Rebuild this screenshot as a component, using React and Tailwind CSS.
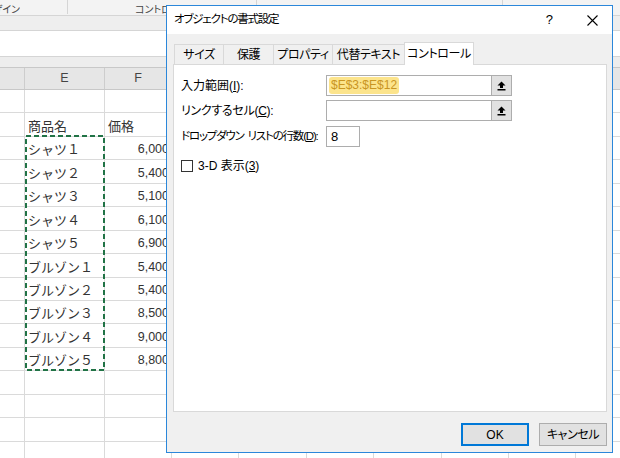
import React from "react";

const cols = [
  "w-[25px]",
  "w-[80px]",
  "w-[67px]",
  "w-[67px]",
  "w-[68px]",
  "w-[67px]",
  "w-[68px]",
  "w-[67px]",
  "w-[67px]",
  "w-[67px]",
];

const rows = [
  ["", ""],
  ["商品名", "価格"],
  ["シャツ１", "6,000"],
  ["シャツ２", "5,400"],
  ["シャツ３", "5,100"],
  ["シャツ４", "6,100"],
  ["シャツ５", "6,900"],
  ["ブルゾン１", "5,400"],
  ["ブルゾン２", "5,400"],
  ["ブルゾン３", "8,500"],
  ["ブルゾン４", "9,000"],
  ["ブルゾン５", "8,800"],
  ["", ""],
  ["", ""],
  ["", ""],
  ["", ""],
];

const tabs = [
  { label: "サイズ", w: "w-[50px]" },
  { label: "保護", w: "w-[51px]" },
  { label: "プロパティ", w: "w-[60px]" },
  { label: "代替テキスト", w: "w-[73px]" },
  { label: "コントロール", w: "w-[70px]", active: true },
];

function UpArrow() {
  return (
    <svg width="9" height="10" viewBox="0 0 9 10">
      <path d="M4.5 0.5 L8.5 4.5 H6 V7 H3 V4.5 H0.5 Z" fill="#000" />
      <rect x="0.5" y="8" width="8" height="1.5" fill="#000" />
    </svg>
  );
}

function RangeBox({ children }) {
  return (
    <div className="flex h-[21px] w-[186px]">
      <div className="flex flex-1 items-center border border-[#adadad] bg-white pl-[2px]">
        {children}
      </div>
      <div className="-ml-px flex w-[21px] items-center justify-center border border-[#adadad] bg-[#e1e1e1]">
        <UpArrow />
      </div>
    </div>
  );
}

function Sheet() {
  return (
    <div className="font-['Noto_Sans_CJK_JP',sans-serif] text-[#333]">
      {/* ribbon bottom */}
      <div className="flex h-[16px] border-b border-[#d5d5d5] bg-[#f3f3f3] pt-[2px] text-[10px] leading-[13px] text-[#444] [font-feature-settings:'palt']">
        <div className="flex w-[20px] justify-end overflow-hidden whitespace-nowrap">デザイン</div>
        <div className="w-[47px]" />
        <div className="h-[14px] w-px -mt-[2px] bg-[#d5d5d5]" />
        <div className="w-[67px]" />
        <div className="w-[121px] whitespace-nowrap">コントロール</div>
        <div className="h-[14px] w-px -mt-[2px] bg-[#d5d5d5]" />
        <div className="w-[245px]" />
        <div className="h-[14px] w-px -mt-[2px] bg-[#d5d5d5]" />
      </div>
      <div className="h-[15px] border-b border-[#d5d5d5] bg-[#eeeeee]" />
      {/* formula bar */}
      <div className="h-[26px] border-b border-[#d5d5d5] bg-white" />
      <div className="h-[10px] bg-[#ededed]" />
      {/* column headers */}
      <div className="flex h-[23px] border-y border-[#c8c8c8] bg-[#e6e6e6] font-['Liberation_Sans',sans-serif] text-[12.5px] text-[#444]">
        {cols.map((c, i) => (
          <div key={i} className={`${c} flex shrink-0 items-center justify-center border-r border-[#cdcdcd]`}>
            {i === 1 ? "E" : i === 2 ? "F" : ""}
          </div>
        ))}
      </div>
      {rows.map((r, ri) => (
        <div key={ri} className="flex h-[23.45px]">
          {cols.map((c, ci) => (
            <div
              key={ci}
              className={`${c} flex shrink-0 items-end border-r border-b border-[#dadada] pb-[2px] leading-[16px] ${
                ci === 2 && ri > 1
                  ? "justify-end pr-[2px] font-['Liberation_Sans',sans-serif] text-[12.5px]"
                  : "pl-[3px] text-[13px]"
              }`}
            >
              {ci === 1 ? r[0] : ci === 2 ? r[1] : ""}
            </div>
          ))}
        </div>
      ))}
    </div>
  );
}

function Dialog() {
  return (
    <div className="absolute left-[166px] top-[5px] flex h-[448px] w-[447px] flex-col border border-[#2b87da] bg-[#f0f0f0] font-['Liberation_Sans','Noto_Sans_CJK_JP',sans-serif] text-[12px] text-black [font-feature-settings:'palt']">
      {/* title bar */}
      <div className="flex h-[28px] items-center bg-white pl-[7px] pr-[14px]">
        <span className="flex-1 text-[11.5px] tracking-[-1.2px]">オブジェクトの書式設定</span>
        <span className="mr-[34px] text-[13px]">?</span>
        <svg width="11" height="11" viewBox="0 0 11 11">
          <path d="M0.5 0.5 L10.5 10.5 M10.5 0.5 L0.5 10.5" stroke="#000" strokeWidth="1.1" />
        </svg>
      </div>

      <div className="flex flex-col pl-[6px] pt-[8px]">
        {/* tabs */}
        <div className="relative z-10 ml-[1px] flex h-[22px] items-end">
          {tabs.map((t, i) => (
            <div
              key={t.label}
              className={`${t.w} ${i > 0 ? "-ml-px" : ""} flex items-center justify-center whitespace-nowrap border border-b-0 border-[#d9d9d9] tracking-[-0.4px] ${
                t.active ? "h-[23px] -mb-px bg-white pb-[1px]" : "h-[20px] bg-[#f0f0f0]"
              }`}
            >
              {t.label}
            </div>
          ))}
        </div>

        {/* panel */}
        <div className="flex h-[348px] w-[434px] flex-col border border-[#d9d9d9] bg-white pl-[7px] pt-[10px]">
          <div className="flex h-[21px] items-center">
            <div className="w-[145px] whitespace-nowrap">
              入力範囲(<span className="underline">I</span>):
            </div>
            <RangeBox>
              <span className="rounded-[3px] bg-[#fce48c] px-[2px] leading-[17px] text-[#c99522]">$E$3:$E$12</span>
            </RangeBox>
          </div>
          <div className="mt-[4px] flex h-[21px] items-center">
            <div className="w-[145px] whitespace-nowrap tracking-[-0.3px]">
              リンクするセル(<span className="underline">C</span>):
            </div>
            <RangeBox />
          </div>
          <div className="mt-[5px] flex h-[21px] items-center">
            <div className="w-[145px] whitespace-nowrap text-[11.5px] tracking-[-1.2px]">
              ドロップダウン<span className="ml-[4px]">リストの行数(</span>
              <span className="underline">D</span>):
            </div>
            <div className="flex h-[21px] w-[34px] items-center border border-[#adadad] bg-white pl-[4px] text-[13px]">
              8
            </div>
          </div>
          <div className="mt-[13px] flex h-[12px] items-center">
            <div className="h-[12px] w-[12px] border border-[#333] bg-white" />
            <div className="ml-[5px]">
              3-D 表示(<span className="underline">3</span>)
            </div>
          </div>
        </div>

        {/* buttons */}
        <div className="mt-[11px] flex w-[434px] justify-end gap-[10px]">
          <div className="flex h-[23px] w-[68px] items-center justify-center border-2 border-[#0078d7] bg-[#e1e1e1]">
            OK
          </div>
          <div className="flex h-[23px] w-[68px] items-center justify-center border border-[#adadad] bg-[#e1e1e1] tracking-[-0.4px]">
            キャンセル
          </div>
        </div>
      </div>
    </div>
  );
}

export default function App() {
  return (
    <div className="relative h-[458px] w-[620px] overflow-hidden bg-white">
      <Sheet />
      {/* copy marquee around E3:E12 */}
      <svg className="absolute left-[25px] top-[135px]" width="80" height="236" viewBox="0 0 80 236">
        <rect x="1" y="1" width="78" height="234" fill="none" stroke="#217346" strokeWidth="2" strokeDasharray="5 3" />
      </svg>
      <Dialog />
    </div>
  );
}
